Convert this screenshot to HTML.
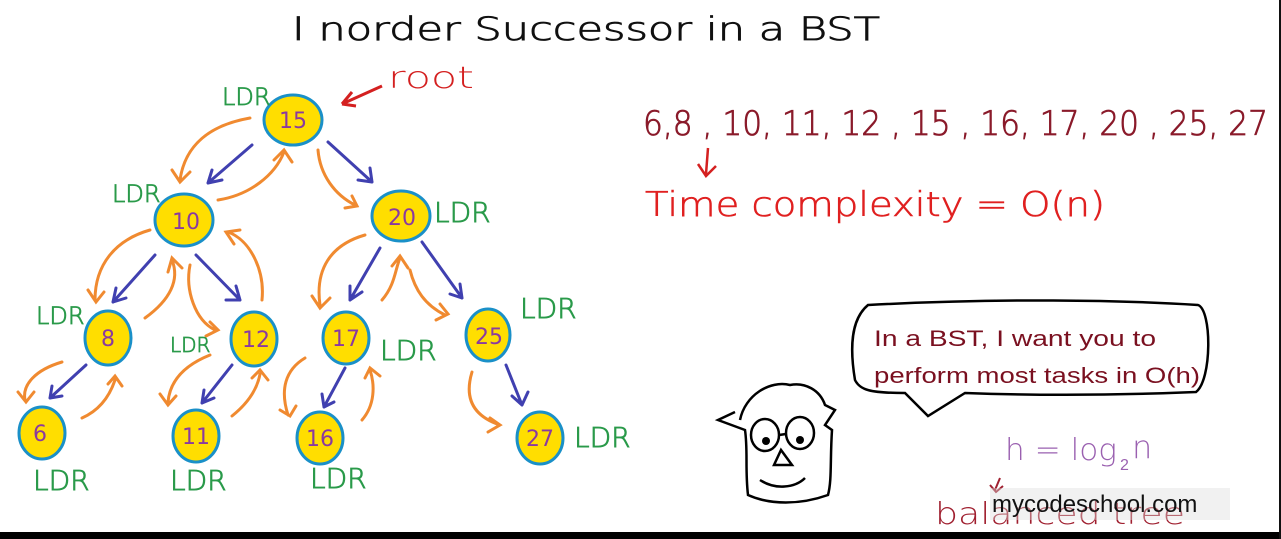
<!DOCTYPE html>
<html><head><style>
html,body{margin:0;padding:0;background:#fff;}
body{width:1281px;height:539px;overflow:hidden;position:relative;}
svg{position:absolute;left:0;top:0;}
</style></head><body>
<svg width="1281" height="539" viewBox="0 0 1281 539" xmlns="http://www.w3.org/2000/svg" font-family="'Liberation Sans', sans-serif">
<rect width="1281" height="539" fill="#fff"/>
<text x="292" y="40" font-size="32" fill="#111" stroke="#111" stroke-width="0.8" font-family="'DejaVu Sans', sans-serif" font-weight="300" textLength="588" lengthAdjust="spacingAndGlyphs">I norder  Successor in  a BST</text>
<text x="388" y="88" font-size="30" fill="#d42020" font-family="'DejaVu Sans',sans-serif" font-weight="300" textLength="86" lengthAdjust="spacingAndGlyphs">root</text>
<path d="M382 86 L342 104 M342 104 L352 92 M342 104 L356 106" stroke="#d42020" stroke-width="3" fill="none"/>
<g fill="none" stroke-width="3" stroke-linecap="round">
<g stroke="#f08a30">
<path d="M250 118 C210 125 185 145 180 180 M172 170 L180 182 L190 172"/>
<path d="M218 200 C250 195 275 175 284 152 M274 160 L284 150 L292 162"/>
<path d="M318 150 C320 175 335 195 355 205 M345 208 L357 206 L352 196"/>
<path d="M150 230 C115 240 95 265 95 300 M88 290 L96 302 L104 292"/>
<path d="M145 318 C170 300 180 280 172 260 M168 272 L172 258 L182 268"/>
<path d="M190 265 C185 290 195 320 215 330 M206 336 L218 330 L210 322"/>
<path d="M262 300 C265 270 250 240 228 232 M240 230 L226 232 L234 244"/>
<path d="M365 235 C330 245 315 270 320 305 M312 296 L320 308 L330 298"/>
<path d="M382 300 C395 285 395 270 400 258 M392 266 L400 256 L408 268"/>
<path d="M410 270 C415 290 425 305 445 315 M436 320 L448 314 L440 304"/>
<path d="M62 362 C35 370 22 385 25 400 M18 392 L26 402 L34 392"/>
<path d="M82 418 C100 410 110 395 115 380 M108 384 L115 376 L122 386"/>
<path d="M210 355 C185 365 170 380 168 402 M160 394 L168 405 L176 396"/>
<path d="M232 416 C252 400 258 385 260 374 M252 378 L260 370 L268 380"/>
<path d="M305 358 C285 370 280 390 288 415 M280 410 L290 416 L296 406"/>
<path d="M362 420 C375 405 375 385 370 370 M365 378 L370 368 L380 376"/>
<path d="M472 372 C465 395 470 415 500 425 M488 432 L500 425 L490 418"/>
</g>
<g stroke="#4040b0">
<path d="M252 145 L208 183 M208 183 L222 180 M208 183 L212 170"/>
<path d="M328 142 L372 182 M372 182 L358 180 M372 182 L370 168"/>
<path d="M155 255 L113 302 M113 302 L126 298 M113 302 L116 288"/>
<path d="M196 255 L240 300 M240 300 L236 286 M240 300 L226 300"/>
<path d="M380 248 L350 300 M350 300 L362 292 M350 300 L350 286"/>
<path d="M422 242 L462 298 M462 298 L460 284 M462 298 L450 294"/>
<path d="M86 365 L50 398 M50 398 L62 396 M50 398 L52 386"/>
<path d="M232 365 L202 403 M202 403 L214 398 M202 403 L204 390"/>
<path d="M345 368 L324 407 M324 407 L334 402 M324 407 L322 394"/>
<path d="M506 365 L522 405 M522 405 L528 392 M522 405 L512 396"/>
</g>
</g>
<g fill="#ffde00" stroke="#1a90c8" stroke-width="3">
<ellipse cx="293" cy="120" rx="29" ry="25"/>
<ellipse cx="184" cy="220" rx="29" ry="26"/>
<ellipse cx="401" cy="216" rx="29" ry="25"/>
<ellipse cx="108" cy="338" rx="23" ry="27"/>
<ellipse cx="254" cy="339" rx="23" ry="27"/>
<ellipse cx="346" cy="338" rx="23" ry="26"/>
<ellipse cx="488" cy="335" rx="22" ry="26"/>
<ellipse cx="42" cy="433" rx="23" ry="26"/>
<ellipse cx="196" cy="436" rx="23" ry="26"/>
<ellipse cx="320" cy="438" rx="23" ry="26"/>
<ellipse cx="540" cy="438" rx="23" ry="26"/>
</g>
<g fill="#8a3aa0" font-size="22" text-anchor="middle" font-family="'DejaVu Sans',sans-serif">
<text x="293" y="128">15</text><text x="186" y="229">10</text><text x="402" y="225">20</text>
<text x="108" y="346">8</text><text x="256" y="347">12</text><text x="346" y="346">17</text>
<text x="489" y="344">25</text><text x="40" y="441">6</text><text x="196" y="444">11</text>
<text x="320" y="446">16</text><text x="540" y="446">27</text>
</g>
<g fill="#2a9a4a" stroke="#2a9a4a" stroke-width="0.8" font-size="28" font-family="'DejaVu Sans',sans-serif" font-weight="300">
<text x="222" y="105" font-size="24">LDR</text>
<text x="112" y="202" font-size="24">LDR</text>
<text x="434" y="222">LDR</text>
<text x="36" y="324" font-size="24">LDR</text>
<text x="170" y="352" font-size="20">LDR</text>
<text x="380" y="360">LDR</text>
<text x="520" y="318">LDR</text>
<text x="33" y="490">LDR</text>
<text x="170" y="490">LDR</text>
<text x="310" y="488">LDR</text>
<text x="574" y="447">LDR</text>
</g>
<text x="643" y="135" font-size="34" fill="#8a1a2a" stroke="#8a1a2a" stroke-width="0.8" font-family="'DejaVu Sans',sans-serif" font-weight="300" textLength="625" lengthAdjust="spacingAndGlyphs">6,8 , 10, 11, 12 , 15 , 16, 17, 20 , 25, 27</text>
<path d="M708 148 L706 174 M698 164 L706 176 L716 166" stroke="#d42020" stroke-width="2.5" fill="none"/>
<text x="645" y="216" font-size="34" fill="#e02020" stroke="#e02020" stroke-width="0.6" font-family="'DejaVu Sans',sans-serif" font-weight="300" textLength="460" lengthAdjust="spacingAndGlyphs">Time complexity = O(n)</text>
<path d="M868 305 C1000 298 1120 300 1198 305 C1212 310 1212 380 1196 392 C1100 396 1020 395 965 393 L928 416 L905 393 C870 393 860 390 855 380 C850 350 850 320 868 305 Z" fill="#fff" stroke="#000" stroke-width="2.5"/>
<text x="874" y="346" font-size="22" fill="#7a1020" textLength="282" lengthAdjust="spacingAndGlyphs">In a BST, I want you to</text>
<text x="874" y="383" font-size="22" fill="#7a1020" textLength="326" lengthAdjust="spacingAndGlyphs">perform most tasks in O(h)</text>
<g fill="none" stroke="#000" stroke-width="2.5">
<path d="M740 420 C745 395 770 380 790 385 C805 382 820 390 825 405 L835 410 L825 425 L832 430 C830 460 832 480 828 495 C800 505 770 505 748 495 C745 470 748 450 745 430 L718 420 L735 412"/>
<ellipse cx="765" cy="435" rx="14" ry="16"/><ellipse cx="800" cy="433" rx="14" ry="16"/>
<path d="M779 435 L786 434"/>
<path d="M774 465 L781 450 L792 465 Z"/>
<path d="M760 480 C775 490 795 488 805 478"/>
</g>
<circle cx="766" cy="441" r="4"/><circle cx="800" cy="440" r="4"/>
<text x="1005" y="460" font-size="30" fill="#9a60b0" font-family="'DejaVu Sans',sans-serif" font-weight="300" textLength="112" lengthAdjust="spacingAndGlyphs">h = log</text>
<text x="1120" y="470" font-size="16" fill="#9a60b0">2</text>
<text x="1132" y="458" font-size="32" fill="#9a60b0" font-family="'DejaVu Sans',sans-serif" font-weight="300">n</text>
<path d="M1000 478 L995 490 M990 485 L996 492 L1003 486" stroke="#a02030" stroke-width="2" fill="none"/>
<text x="935" y="524" font-size="30" fill="#a02030" font-family="'DejaVu Sans',sans-serif" font-weight="300" textLength="250" lengthAdjust="spacingAndGlyphs">balanced tree</text>
<rect x="990" y="488" width="240" height="32" fill="#ddd" opacity="0.4"/>
<text x="992" y="512" font-size="24" fill="#111">mycodeschool.com</text>
<rect x="0" y="532" width="1281" height="7" fill="#000"/>
<rect x="1279" y="0" width="2" height="539" fill="#111"/>
</svg>
</body></html>
